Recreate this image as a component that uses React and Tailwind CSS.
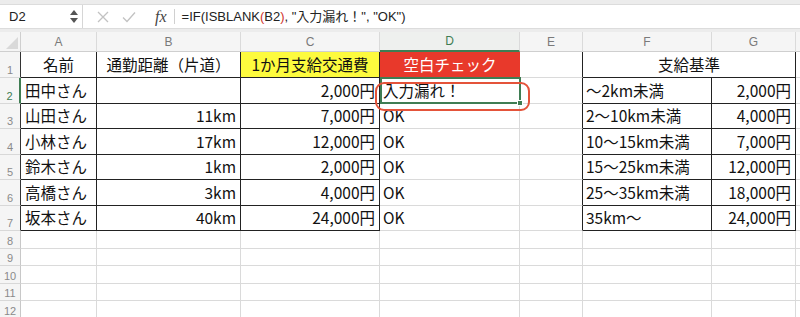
import React from "react";

const FONT = { fontFamily: '"Noto Sans CJK JP", "Noto Sans", sans-serif' };
const UI = { fontFamily: '"Liberation Sans", Arial, "Noto Sans CJK JP", sans-serif' };

const GRID = "grid grid-cols-[21px_76px_144px_139px_140px_63px_129px_84px_1fr]";

const rows = [
  ["田中さん", "", "2,000円", "入力漏れ！", "〜2km未満", "2,000円"],
  ["山田さん", "11km", "7,000円", "OK", "2〜10km未満", "4,000円"],
  ["小林さん", "17km", "12,000円", "OK", "10〜15km未満", "7,000円"],
  ["鈴木さん", "1km", "2,000円", "OK", "15〜25km未満", "12,000円"],
  ["高橋さん", "3km", "4,000円", "OK", "25〜35km未満", "18,000円"],
  ["坂本さん", "40km", "24,000円", "OK", "35km〜", "24,000円"],
];

function RowNum({ n, h, active, dark }) {
  return (
    <div
      className={`flex items-end justify-center pb-[1px] leading-none bg-[#f5f5f5] border-b border-b-[#d8d8d8] text-[11px] ${h} ${
        active ? "text-[#3f7d53] border-r-2 border-r-[#3f7d53]" : "text-[#8a8a8a] border-r border-r-[#c8c8c8]"
      } ${dark ? "!border-r-[#333]" : ""}`}
      style={UI}
    >
      {n}
    </div>
  );
}

export default function App() {
  return (
    <div className="w-[800px] h-[317px] overflow-hidden bg-white relative" style={FONT}>
      {/* formula bar */}
      <div className="h-[32px] bg-[#ececec] pt-[4px] pb-[3px]">
        <div className="h-[25px] bg-white flex items-center border-y border-[#dcdcdc]" style={UI}>
          <div className="w-[83px] h-full flex items-center justify-between pl-[9px] pr-[4px] border-r border-[#d6d6d6]">
            <span className="text-[13px] text-[#222]">D2</span>
            <div className="flex flex-col items-center gap-[3px]">
              <svg width="8" height="5" viewBox="0 0 8 5"><path d="M4 0L8 5H0z" fill="#555" /></svg>
              <svg width="8" height="5" viewBox="0 0 8 5"><path d="M0 0H8L4 5z" fill="#555" /></svg>
            </div>
          </div>
          <div className="flex items-center pl-[14px] gap-[13px]">
            <svg width="12" height="12" viewBox="0 0 12 12"><path d="M1 1L11 11M11 1L1 11" stroke="#c2c2c2" strokeWidth="1.3" /></svg>
            <svg width="14" height="12" viewBox="0 0 14 12"><path d="M1 6.5L5 10.5L13 1.5" stroke="#c2c2c2" strokeWidth="1.3" fill="none" /></svg>
          </div>
          <span
            className="ml-[19px] text-[16px] italic text-[#444]"
            style={{ fontFamily: '"Liberation Serif", "Times New Roman", serif' }}
          >
            fx
          </span>
          <div className="ml-[7px] w-px h-[15px] bg-[#d0d0d0]" />
          <span className="ml-[7px] text-[13px] text-[#222] whitespace-nowrap" style={UI}>
            =IF(ISBLANK<span className="text-[#d0342c]">(</span>B2<span className="text-[#d0342c]">)</span>, "入力漏れ！", "OK")
          </span>
        </div>
      </div>

      {/* column headers */}
      <div className={`${GRID} h-[20px] bg-[#f5f5f5] text-[12px]`} style={UI}>
        <div className="border-r border-b border-[#cfcfcf] relative overflow-hidden">
          <svg className="absolute right-[2px] bottom-[2px]" width="12" height="12" viewBox="0 0 12 12">
            <path d="M12 0V12H0z" fill="#d9d9d9" />
          </svg>
        </div>
        {["A", "B", "C", "D", "E", "F", "G"].map((c) => (
          <div
            key={c}
            className={`flex items-center justify-center border-r border-r-[#dadada] ${
              c === "D" ? "text-[#3f7d53] border-b-2 border-b-[#3f7d53] bg-[#eef0ee]" : "text-[#7a7a7a] border-b border-b-[#cfcfcf]"
            }`}
          >
            {c}
          </div>
        ))}
        <div className="border-b border-[#cfcfcf]" />
      </div>

      {/* row 1 */}
      <div className={`${GRID} h-[26px] text-[15.5px] text-[#111]`}>
        <RowNum n="1" h="h-[26px]" dark />
        <div className="flex items-center justify-center border-r border-b border-[#222]">名前</div>
        <div className="flex items-center justify-center border-r border-b border-[#222]">通勤距離（片道）</div>
        <div className="flex items-center justify-center border-r border-b border-[#222] bg-[#fdfb3e]">1か月支給交通費</div>
        <div className="flex items-center justify-center bg-[#e8392b] text-white">空白チェック</div>
        <div className="border-r border-r-[#222] border-b border-b-[#dadada]" />
        <div className="col-span-2 flex items-center justify-center border-r border-b border-[#222] border-l-0">支給基準</div>
        <div className="border-b border-[#dadada]" />
      </div>

      {/* rows 2-7 */}
      {rows.map((r, i) => (
        <div key={i} className={`${GRID} h-[25.5px] text-[15.5px] text-[#111]`}>
          <RowNum n={String(i + 2)} h="h-[25.5px]" active={i === 0} dark={i !== 0} />
          <div className="flex items-center pl-[4px] border-r border-b border-[#222] whitespace-nowrap">{r[0]}</div>
          <div className="flex items-center justify-end pr-[4px] border-r border-b border-[#222]">{r[1]}</div>
          <div className="flex items-center justify-end pr-[4px] border-r border-b border-[#222] whitespace-nowrap">{r[2]}</div>
          <div className="flex items-center pl-[3px] border-r border-b border-[#dadada] whitespace-nowrap">{r[3]}</div>
          <div className="border-r border-r-[#222] border-b border-b-[#dadada]" />
          <div className="flex items-center pl-[3px] border-r border-b border-[#222] whitespace-nowrap">{r[4]}</div>
          <div className="flex items-center justify-end pr-[4px] border-r border-b border-[#222] whitespace-nowrap">{r[5]}</div>
          <div className="border-b border-[#dadada]" />
        </div>
      ))}

      {/* empty rows 8-12 */}
      {[8, 9, 10, 11, 12].map((n) => (
        <div key={n} className={`${GRID} h-[17.5px]`}>
          <RowNum n={String(n)} h="h-[17.5px]" />
          {[0, 1, 2, 3, 4, 5, 6].map((k) => (
            <div key={k} className="border-r border-b border-[#dadada]" />
          ))}
          <div className="border-b border-[#dadada]" />
        </div>
      ))}

      {/* selected cell D2 */}
      <div className="absolute left-[380px] top-[77px] w-[141px] h-[27px] border-2 border-[#3f7d53] pointer-events-none">
        <div className="absolute -right-[4px] -bottom-[4px] w-[6px] h-[6px] bg-[#3f7d53] border border-white" />
      </div>

      {/* annotation */}
      <div className="absolute left-[375px] top-[82px] w-[155px] h-[29px] rounded-[9px] border-2 border-[#e4533a] pointer-events-none" />
    </div>
  );
}
